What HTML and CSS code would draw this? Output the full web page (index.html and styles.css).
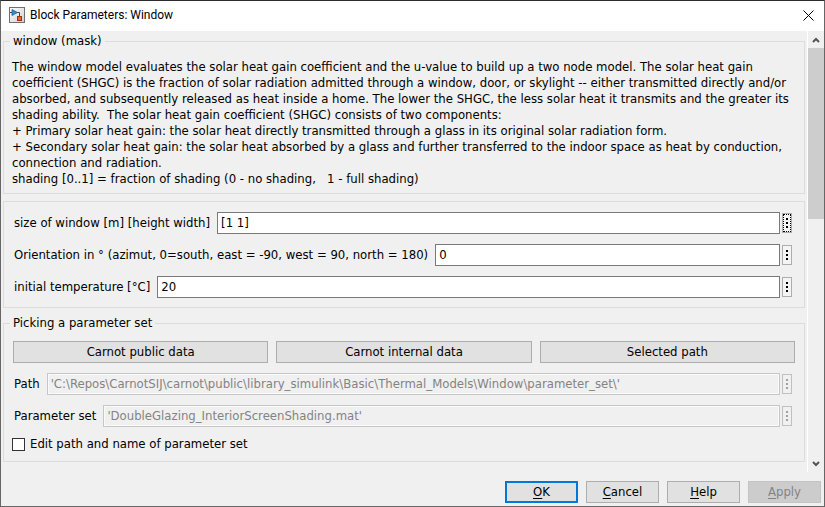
FILE: index.html
```html
<!DOCTYPE html>
<html lang="en">
<head>
<meta charset="utf-8">
<title>Block Parameters: Window</title>
<link rel="stylesheet" href="styles.css">
</head>
<body>
<main class="dialog">
  <header class="titlebar">
    <svg class="app-icon" viewBox="0 0 16 16" aria-hidden="true">
      <defs><linearGradient id="g" x1="0" y1="0" x2="1" y2="1"><stop offset="0" stop-color="#fff"/><stop offset="1" stop-color="#cfcfcf"/></linearGradient></defs>
      <rect x=".5" y=".5" width="15" height="15" fill="url(#g)" stroke="#6f6f6f"/>
      <path d="M1 5.5H3M8 5.5H10.5V10" fill="none" stroke="#444"/>
      <path d="M3 2.5V8.5L8.5 5.5Z" fill="#2f8fd0" stroke="#1a5f9c" stroke-width=".8"/>
      <rect x="8.5" y="9.5" width="4" height="4" fill="#e8642c" stroke="#a8300c"/>
    </svg>
    <h1 class="title">Block Parameters: Window</h1>
    <button class="close" type="button" aria-label="Close">
      <svg class="close-icon" viewBox="0 0 11 11"><path d="M.5 .5L10.5 10.5M10.5 .5L.5 10.5" stroke="#000" fill="none"/></svg>
    </button>
  </header>

  <div class="viewport">
    <form class="content">
      <fieldset class="group titled">
        <legend>window (mask)</legend>
        <p class="description">The window model evaluates the solar heat gain coefficient and the u-value to build up a two node model. The solar heat gain
coefficient (SHGC) is the fraction of solar radiation admitted through a window, door, or skylight -- either transmitted directly and/or
absorbed, and subsequently released as heat inside a home. The lower the SHGC, the less solar heat it transmits and the greater its
shading ability.  The solar heat gain coefficient (SHGC) consists of two components:
+ Primary solar heat gain: the solar heat directly transmitted through a glass in its original solar radiation form.
+ Secondary solar heat gain: the solar heat absorbed by a glass and further transferred to the indoor space as heat by conduction,
connection and radiation.
shading [0..1] = fraction of shading (0 - no shading,   1 - full shading)</p>
      </fieldset>

      <fieldset class="group">
        <div class="row">
          <label for="size">size of window [m] [height width]</label>
          <input class="field" id="size" type="text" value="[1 1]">
          <button class="more focused" type="button" aria-label="Size options"><i></i><i></i><i></i></button>
        </div>
        <div class="row">
          <label for="orientation">Orientation in ° (azimut, 0=south, east = -90, west = 90, north = 180)</label>
          <input class="field" id="orientation" type="text" value="0">
          <button class="more" type="button" aria-label="Orientation options"><i></i><i></i><i></i></button>
        </div>
        <div class="row">
          <label for="temperature">initial temperature [°C]</label>
          <input class="field" id="temperature" type="text" value="20">
          <button class="more" type="button" aria-label="Temperature options"><i></i><i></i><i></i></button>
        </div>
      </fieldset>

      <fieldset class="group titled">
        <legend>Picking a parameter set</legend>
        <div class="sources">
          <button class="button" type="button">Carnot public data</button>
          <button class="button" type="button">Carnot internal data</button>
          <button class="button" type="button">Selected path</button>
        </div>
        <div class="row">
          <label for="path">Path</label>
          <input class="field" id="path" type="text" disabled value="'C:\Repos\CarnotSIJ\carnot\public\library_simulink\Basic\Thermal_Models\Window\parameter_set\'">
          <button class="more" type="button" disabled aria-label="Path options"><i></i><i></i><i></i></button>
        </div>
        <div class="row">
          <label for="set">Parameter set</label>
          <input class="field" id="set" type="text" disabled value="'DoubleGlazing_InteriorScreenShading.mat'">
          <button class="more" type="button" disabled aria-label="Parameter set options"><i></i><i></i><i></i></button>
        </div>
        <div class="check">
          <input class="box" id="edit" type="checkbox">
          <label for="edit">Edit path and name of parameter set</label>
        </div>
      </fieldset>
    </form>

    <div class="scrollbar">
      <button class="arrow" type="button" aria-label="Scroll up"><svg viewBox="0 0 8 6"><path d="M1 5L4 2L7 5" /></svg></button>
      <div class="track"><div class="thumb"></div></div>
      <button class="arrow" type="button" aria-label="Scroll down"><svg viewBox="0 0 8 6"><path d="M1 1L4 4L7 1" /></svg></button>
    </div>
  </div>

  <footer class="actions">
    <button class="button default" type="button"><u>O</u>K</button>
    <button class="button" type="button"><u>C</u>ancel</button>
    <button class="button" type="button"><u>H</u>elp</button>
    <button class="button" type="button" disabled><u>A</u>pply</button>
  </footer>
</main>
</body>
</html>
```
FILE: styles.css
```css
* { box-sizing: border-box; }

body {
  margin: 0;
  color: #000;
  font: 13px/16px "DejaVu Sans Condensed", "Noto Sans", sans-serif;
}

button, input { margin: 0; font: inherit; color: inherit; }

.dialog {
  display: flex;
  flex-direction: column;
  min-height: 100vh;
  background: #f0f0f0;
  border: 1px solid #666;
  border-top-color: #2b2b2b;
}

.titlebar {
  display: flex;
  align-items: center;
  height: 30px;
  padding: 0 10px 2px 8px;
  background: #fff;
}
.app-icon { width: 16px; height: 16px; margin-right: 5px; }
.title { flex: 1; margin: 0; font: 12px/16px Roboto, sans-serif; }
.close { display: flex; padding: 0; border: 0; background: none; }
.close-icon { width: 11px; height: 11px; }

.viewport { display: flex; flex: 1; }

.content {
  display: flex;
  flex: 1;
  flex-direction: column;
  gap: 7px;
  min-width: 0;
  padding: 2px 2px 0;
}

.group {
  display: flex;
  flex-direction: column;
  gap: 10px;
  min-width: 0;
  margin: 0;
  padding: 10px 9px 9px;
  border: 1px solid #dcdcdc;
}
.group legend { margin-left: -3px; padding: 0 3px; }

.description { margin: 0 -4px -3px -1px; white-space: pre-wrap; }

.row { display: flex; align-items: center; padding: 0 3px 0 1px; }
.row label { flex: none; margin-right: 7px; }

.field {
  flex: 1;
  min-width: 0;
  height: 22px;
  padding: 0 3px 2px;
  background: #fff;
  border: 1px solid #7a7a7a;
  border-radius: 0;
}
.field:disabled {
  color: #838383;
  background: #f0f0f0;
  border-color: #c6c6c6;
  box-shadow: inset 0 0 0 1px #fafafa;
}

.more {
  display: flex;
  flex-direction: column;
  align-items: center;
  justify-content: center;
  gap: 2px;
  width: 10px;
  height: 20px;
  margin-left: 2px;
  padding: 0;
  background: #f4f4f4;
  border: 1px solid #adadad;
}
.more i { width: 2px; height: 2px; background: #000; }
.more.focused { outline: 1px dotted #000; outline-offset: -2px; }
.more:disabled { background: #f0f0f0; border-color: #c0c0c0; }
.more:disabled i { background: #a0a0a0; }

.sources { display: grid; grid-template-columns: repeat(3, 1fr); gap: 8px; }

.button {
  height: 22px;
  padding: 0;
  background: #e1e1e1;
  border: 1px solid #adadad;
}
.button:disabled { color: #838383; background: #ccc; border-color: #c4c4c4; }
.button.default { border: 2px solid #0078d7; }
.button u { text-underline-offset: 2px; }

.check { display: flex; align-items: center; gap: 5px; margin-top: -1px; margin-left: -1px; }
.box {
  width: 13px;
  height: 13px;
  appearance: none;
  background: #fff;
  border: 1px solid #333;
}

.scrollbar { display: flex; flex-direction: column; width: 17px; border-left: 1px solid #fff; }
.arrow {
  display: flex;
  align-items: center;
  justify-content: center;
  height: 17px;
  padding: 0;
  background: none;
  border: 0;
}
.arrow svg { width: 8px; height: 6px; fill: none; stroke: #555; stroke-width: 2; }
.track { flex: 1; }
.thumb { height: 42%; background: #cdcdcd; }

.actions {
  display: flex;
  justify-content: flex-end;
  gap: 8px;
  padding: 9px 3px 3px;
}
.actions .button { width: 73px; }
```
